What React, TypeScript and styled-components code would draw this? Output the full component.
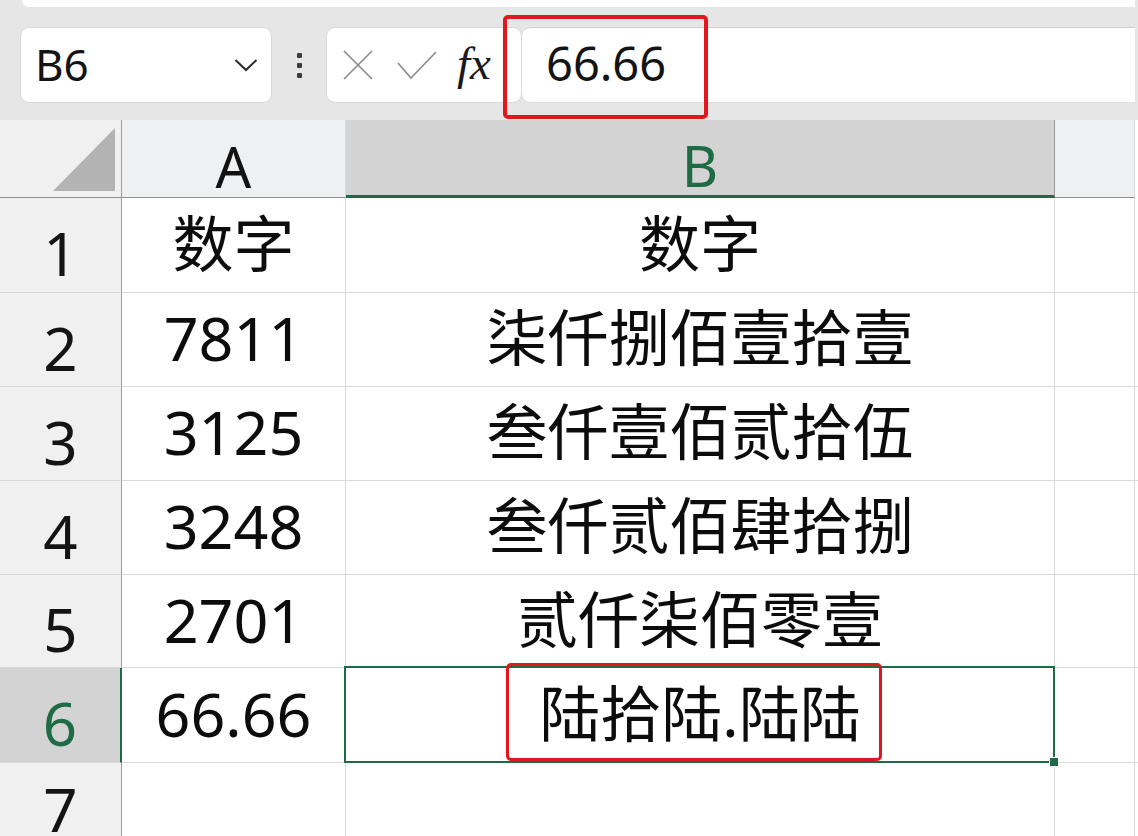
import React from "react";
import styled, { createGlobalStyle, css } from "styled-components";

const GlobalStyle = createGlobalStyle`
  html, body { margin: 0; padding: 0; }
  body {
    width: 1138px;
    height: 836px;
    overflow: hidden;
    background: #ffffff;
    font-family: "Noto Sans", "Noto Sans CJK SC", sans-serif;
  }
`;

const GREEN = "#1f6b45";
const RED = "#e2161c";

const Page = styled.div`
  width: 1138px;
  height: 836px;
  display: flex;
  flex-direction: column;
  background: #e6e6e6;
  overflow: hidden;
`;

const TopStrip = styled.div`
  height: 7px;
  margin-left: 22px;
  margin-right: 3px;
  background: #ffffff;
  border-bottom-left-radius: 9px;
  flex: none;
`;

const FormulaBar = styled.div`
  position: relative;
  height: 113px;
  flex: none;
  display: flex;
  align-items: flex-start;
  padding: 20px 3px 0 20px;
  box-sizing: border-box;
  background: #e6e6e6;
`;

const NameBox = styled.div`
  width: 252px;
  height: 76px;
  box-sizing: border-box;
  background: #ffffff;
  border: 1px solid #d9d9d9;
  border-radius: 9px;
  display: flex;
  align-items: center;
  justify-content: space-between;
  padding: 0 13px 0 14px;
`;

const NameText = styled.span`
  font-family: "Noto Sans", sans-serif;
  font-size: 44px;
  line-height: 1;
  color: #141414;
  margin-top: -3px;
`;

const Grip = styled.div`
  width: 5px;
  height: 76px;
  margin: 0 24px 0 25px;
  display: flex;
  flex-direction: column;
  justify-content: center;
  gap: 5px;
`;

const GripDot = styled.span`
  display: block;
  width: 5px;
  height: 5px;
  border-radius: 1px;
  background: #3c3c3c;
`;

const FuncBox = styled.div`
  width: 196px;
  height: 76px;
  box-sizing: border-box;
  background: #ffffff;
  border: 1px solid #d9d9d9;
  border-radius: 9px;
  display: flex;
  align-items: center;
  padding-left: 16px;
  gap: 22px;
`;

const Fx = styled.span`
  font-family: "Liberation Serif", "DejaVu Serif", serif;
  font-style: italic;
  font-size: 47px;
  line-height: 1;
  color: #1a1a1a;
  margin-left: -2px;
  margin-top: -4px;
`;

const FormulaInput = styled.div`
  flex: 1;
  height: 76px;
  box-sizing: border-box;
  background: #ffffff;
  border-top: 1px solid #cfcfcf;
  border-bottom: 1px solid #dedede;
  border-radius: 9px 0 0 9px;
  display: flex;
  align-items: center;
  padding-left: 24px;
`;

const FormulaValue = styled.span`
  font-family: "Noto Sans", sans-serif;
  font-size: 47px;
  line-height: 1;
  color: #141414;
  margin-top: -4px;
`;

const Annotation = styled.div`
  position: absolute;
  box-sizing: border-box;
  border: 4px solid ${RED};
  border-radius: 5px;
  pointer-events: none;
`;

const Sheet = styled.div`
  flex: 1;
  display: grid;
  grid-template-columns: 122px 224px 709px 80px 3px;
  grid-template-rows: 78px 95px 94px 94px 94px 93px 95px 1fr;
  background: #ffffff;
`;

const Corner = styled.div`
  background: #f0f0f0;
  border-right: 1px solid #9d9d9d;
  border-bottom: 1px solid #8f8f8f;
  display: flex;
  align-items: flex-end;
  justify-content: flex-end;
  padding: 0 6px 6px 0;
`;

const ColHeader = styled.div<{ $selected?: boolean; $last?: boolean }>`
  background: ${(p) => (p.$selected ? "#d3d3d3" : "#eff0f1")};
  border-right: 1px solid ${(p) => (p.$selected ? "#9a9a9a" : "#dadada")};
  border-bottom: ${(p) => (p.$selected ? `3px solid ${GREEN}` : "1px solid #8f8f8f")};
  color: ${(p) => (p.$selected ? GREEN : "#121212")};
  font-family: "Noto Sans", sans-serif;
  font-size: 56px;
  line-height: 1;
  display: flex;
  align-items: center;
  justify-content: center;
  padding-top: 14px;
  box-sizing: border-box;
  ${(p) =>
    p.$last &&
    css`
      background: #ffffff;
      border-right: none;
      border-bottom: none;
    `}
`;

const RowHeader = styled.div<{ $selected?: boolean }>`
  background: ${(p) => (p.$selected ? "#d3d3d3" : "#f0f0f0")};
  border-right: ${(p) => (p.$selected ? `2px solid ${GREEN}` : "1px solid #9d9d9d")};
  border-bottom: 1px solid #d6d6d6;
  color: ${(p) => (p.$selected ? GREEN : "#141414")};
  font-family: "Noto Sans", sans-serif;
  font-size: 60px;
  line-height: 1;
  display: flex;
  align-items: center;
  justify-content: center;
  box-sizing: border-box;
`;

const RowNumber = styled.span`
  display: block;
  margin-top: 16px;
`;

const Cell = styled.div<{ $selected?: boolean; $edge?: boolean }>`
  position: relative;
  background: #ffffff;
  border-right: ${(p) => (p.$edge ? "none" : "1px solid #dadada")};
  border-bottom: 1px solid #dadada;
  color: #0c0c0c;
  font-family: "Noto Sans", "Noto Sans CJK SC", sans-serif;
  font-size: 61px;
  line-height: 1;
  display: flex;
  align-items: center;
  justify-content: center;
  box-sizing: border-box;
  white-space: nowrap;
  ${(p) =>
    p.$selected &&
    css`
      &::after {
        content: "";
        position: absolute;
        left: -2px;
        top: -2px;
        right: -1px;
        bottom: -1px;
        border: 2px solid ${GREEN};
        pointer-events: none;
      }
    `}
`;

const CellText = styled.span`
  display: block;
  margin-top: -4px;
`;

const FillHandle = styled.span`
  position: absolute;
  right: -5px;
  bottom: -5px;
  width: 8px;
  height: 8px;
  background: ${GREEN};
  border: 1px solid #ffffff;
  z-index: 2;
`;

const CellAnnotation = styled(Annotation)`
  left: 160px;
  top: -5px;
  width: 376px;
  height: 98px;
  border-width: 3px;
  z-index: 3;
`;

const rows: [string, string][] = [
  ["数字", "数字"],
  ["7811", "柒仟捌佰壹拾壹"],
  ["3125", "叁仟壹佰贰拾伍"],
  ["3248", "叁仟贰佰肆拾捌"],
  ["2701", "贰仟柒佰零壹"],
  ["66.66", "陆拾陆.陆陆"],
  ["", ""],
];

export default function App() {
  return (
    <>
      <GlobalStyle />
      <Page>
        <TopStrip />
        <FormulaBar>
          <NameBox>
            <NameText>B6</NameText>
            <svg width="24" height="14" viewBox="0 0 24 14">
              <polyline points="1.5,2 12,12 22.5,2" fill="none" stroke="#2a2a2a" strokeWidth="2" />
            </svg>
          </NameBox>
          <Grip>
            <GripDot />
            <GripDot />
            <GripDot />
          </Grip>
          <FuncBox>
            <svg width="30" height="30" viewBox="0 0 30 30">
              <line x1="1" y1="1" x2="29" y2="29" stroke="#8d8d8d" strokeWidth="1.7" />
              <line x1="29" y1="1" x2="1" y2="29" stroke="#8d8d8d" strokeWidth="1.7" />
            </svg>
            <svg width="40" height="28" viewBox="0 0 40 28" style={{ marginLeft: 2 }}>
              <polyline points="1,12 14,27 39,1" fill="none" stroke="#8d8d8d" strokeWidth="1.7" />
            </svg>
            <Fx>fx</Fx>
          </FuncBox>
          <FormulaInput>
            <FormulaValue>66.66</FormulaValue>
          </FormulaInput>
          <Annotation style={{ left: 503, top: 8, width: 205, height: 104 }} />
        </FormulaBar>
        <Sheet>
          <Corner>
            <svg width="62" height="63" viewBox="0 0 62 63">
              <polygon points="0,63 62,63 62,0" fill="#b3b3b3" />
            </svg>
          </Corner>
          <ColHeader>A</ColHeader>
          <ColHeader $selected>B</ColHeader>
          <ColHeader />
          <ColHeader $last />
          {rows.map(([a, b], i) => {
            const selected = i === 5;
            return (
              <React.Fragment key={i}>
                <RowHeader $selected={selected}>
                  <RowNumber>{i + 1}</RowNumber>
                </RowHeader>
                <Cell>
                  <CellText>{a}</CellText>
                </Cell>
                <Cell $selected={selected}>
                  <CellText>{b}</CellText>
                  {selected && <FillHandle />}
                  {selected && <CellAnnotation />}
                </Cell>
                <Cell />
                <Cell $edge />
              </React.Fragment>
            );
          })}
        </Sheet>
      </Page>
    </>
  );
}
